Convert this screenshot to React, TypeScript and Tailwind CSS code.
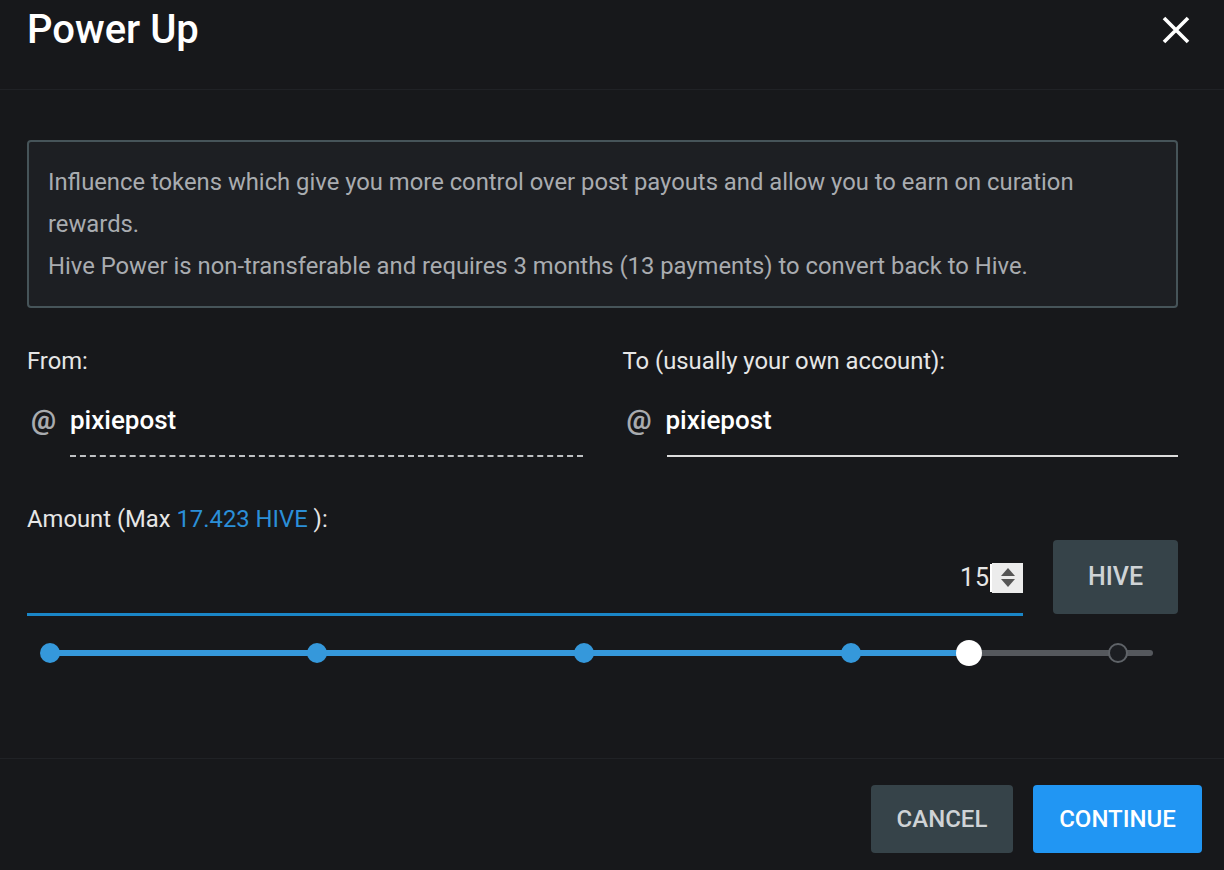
const MARKS = [0, 25, 50, 75, 100]
const PCT = (15 / 17.423) * 100

function AtSign() {
  return (
    <span className="w-[27px] text-[28px] leading-none font-bold text-[#a8abaf]">@</span>
  )
}

function Slider() {
  // track spans 50..1153, marks are laid out over 50..1118
  return (
    <div className="relative h-[30px] ml-[23px] w-[1103px]">
      <div className="absolute left-0 right-0 top-[12px] h-[6px] rounded-full bg-[#55585d]" />
      <div className="absolute left-0 w-[1068px] top-[12px] h-[6px]">
        <div className="h-full bg-[#3598db] rounded-l-full" style={{ width: `${PCT}%` }} />
      </div>
      <div className="absolute left-0 top-0 w-[1068px] h-full">
        {MARKS.map((m) => (
          <span
            key={m}
            className={
              m <= PCT
                ? 'absolute top-[5px] -ml-[10px] w-[20px] h-[20px] rounded-full bg-[#3598db]'
                : 'absolute top-[5px] -ml-[10px] w-[20px] h-[20px] rounded-full bg-[#1c1e22] border-2 border-[#5f6368]'
            }
            style={{ left: `${m}%` }}
          />
        ))}
        <span
          className="absolute top-[2px] -ml-[13px] w-[26px] h-[26px] rounded-full bg-white"
          style={{ left: `${PCT}%` }}
        />
      </div>
    </div>
  )
}

export default function App() {
  return (
    <div
      className="w-[1224px] h-[870px] bg-[#17181b] text-white flex flex-col overflow-hidden"
      style={{ fontFamily: 'Roboto, "Liberation Sans", sans-serif' }}
    >
      <div className="h-[90px] shrink-0 border-b border-[#202226] flex items-start justify-between pl-[27px] pr-[34px] pt-[6px]">
        <h1 className="text-[40px] leading-[48px] font-medium">Power Up</h1>
        <svg className="mt-[10px]" width="28" height="28" viewBox="0 0 28 28">
          <path d="M2 2L26 26M26 2L2 26" stroke="white" strokeWidth="3.6" />
        </svg>
      </div>

      <div className="flex-1 px-[27px] pt-[50px] pr-[46px]">
        <div className="rounded-[4px] border-2 border-[#465459] bg-[#1d1f23] px-[19px] py-[19px] text-[23.8px] leading-[42px] text-[#a9acb0]">
          <p>Influence tokens which give you more control over post payouts and allow you to earn on curation rewards.</p>
          <p>Hive Power is non-transferable and requires 3 months (13 payments) to convert back to Hive.</p>
        </div>

        <div className="grid grid-cols-2 gap-x-[40px] mt-[39px]">
          <div>
            <div className="text-[23.8px] leading-[28px] text-[#e6e6e6]">From:</div>
            <div className="flex items-center gap-[12px] mt-[30px] pl-[4px]">
              <AtSign />
              <span className="text-[26px] leading-[30px] font-medium">pixiepost</span>
            </div>
            <div className="ml-[43px] mt-[20px] w-[513px] border-b-2 border-dashed border-[#bfc1c4]" />
          </div>
          <div>
            <div className="text-[23.8px] leading-[28px] text-[#e6e6e6]">To (usually your own account):</div>
            <div className="flex items-center gap-[12px] mt-[30px] pl-[4px]">
              <AtSign />
              <span className="text-[26px] leading-[30px] font-medium">pixiepost</span>
            </div>
            <div className="ml-[44px] mt-[20px] border-b-2 border-[#dcdcdc]" />
          </div>
        </div>

        <div className="mt-[48px] text-[23.8px] leading-[28px] text-[#e6e6e6]">
          Amount (Max <span className="text-[#2b8fd8]">17.423 HIVE</span> ):
        </div>

        <div className="flex items-start gap-[30px] mt-[7px]">
          <div className="flex-1 h-[76px] border-b-[3px] border-[#1a86c8] flex items-center justify-end pt-[2px]">
            <span className="text-[25px] text-[#e6e6e6] tracking-[1px]">15</span>
            <span className="w-[2px] h-[28px] bg-white" />
            <div className="w-[31px] h-[30px] bg-[#ececec] flex flex-col items-center justify-center gap-[3px]">
              <svg width="14" height="8" viewBox="0 0 14 8"><path d="M7 0L14 8H0Z" fill="#555" /></svg>
              <svg width="14" height="8" viewBox="0 0 14 8"><path d="M0 0H14L7 8Z" fill="#555" /></svg>
            </div>
          </div>
          <button className="w-[125px] h-[74px] rounded-[4px] bg-[#364349] text-[25px] font-medium text-[#cfd3d6]">
            HIVE
          </button>
        </div>

        <div className="mt-[22px]">
          <Slider />
        </div>
      </div>

      <div className="h-[112px] shrink-0 border-t border-[#202226] flex items-start justify-end gap-[20px] pr-[22px] pt-[26px]">
        <button className="w-[142px] h-[68px] rounded-[4px] bg-[#364349] text-[24px] font-medium text-[#cfd3d6]">
          CANCEL
        </button>
        <button className="w-[169px] h-[68px] rounded-[4px] bg-[#2196f3] text-[24px] font-medium text-white">
          CONTINUE
        </button>
      </div>
    </div>
  )
}
